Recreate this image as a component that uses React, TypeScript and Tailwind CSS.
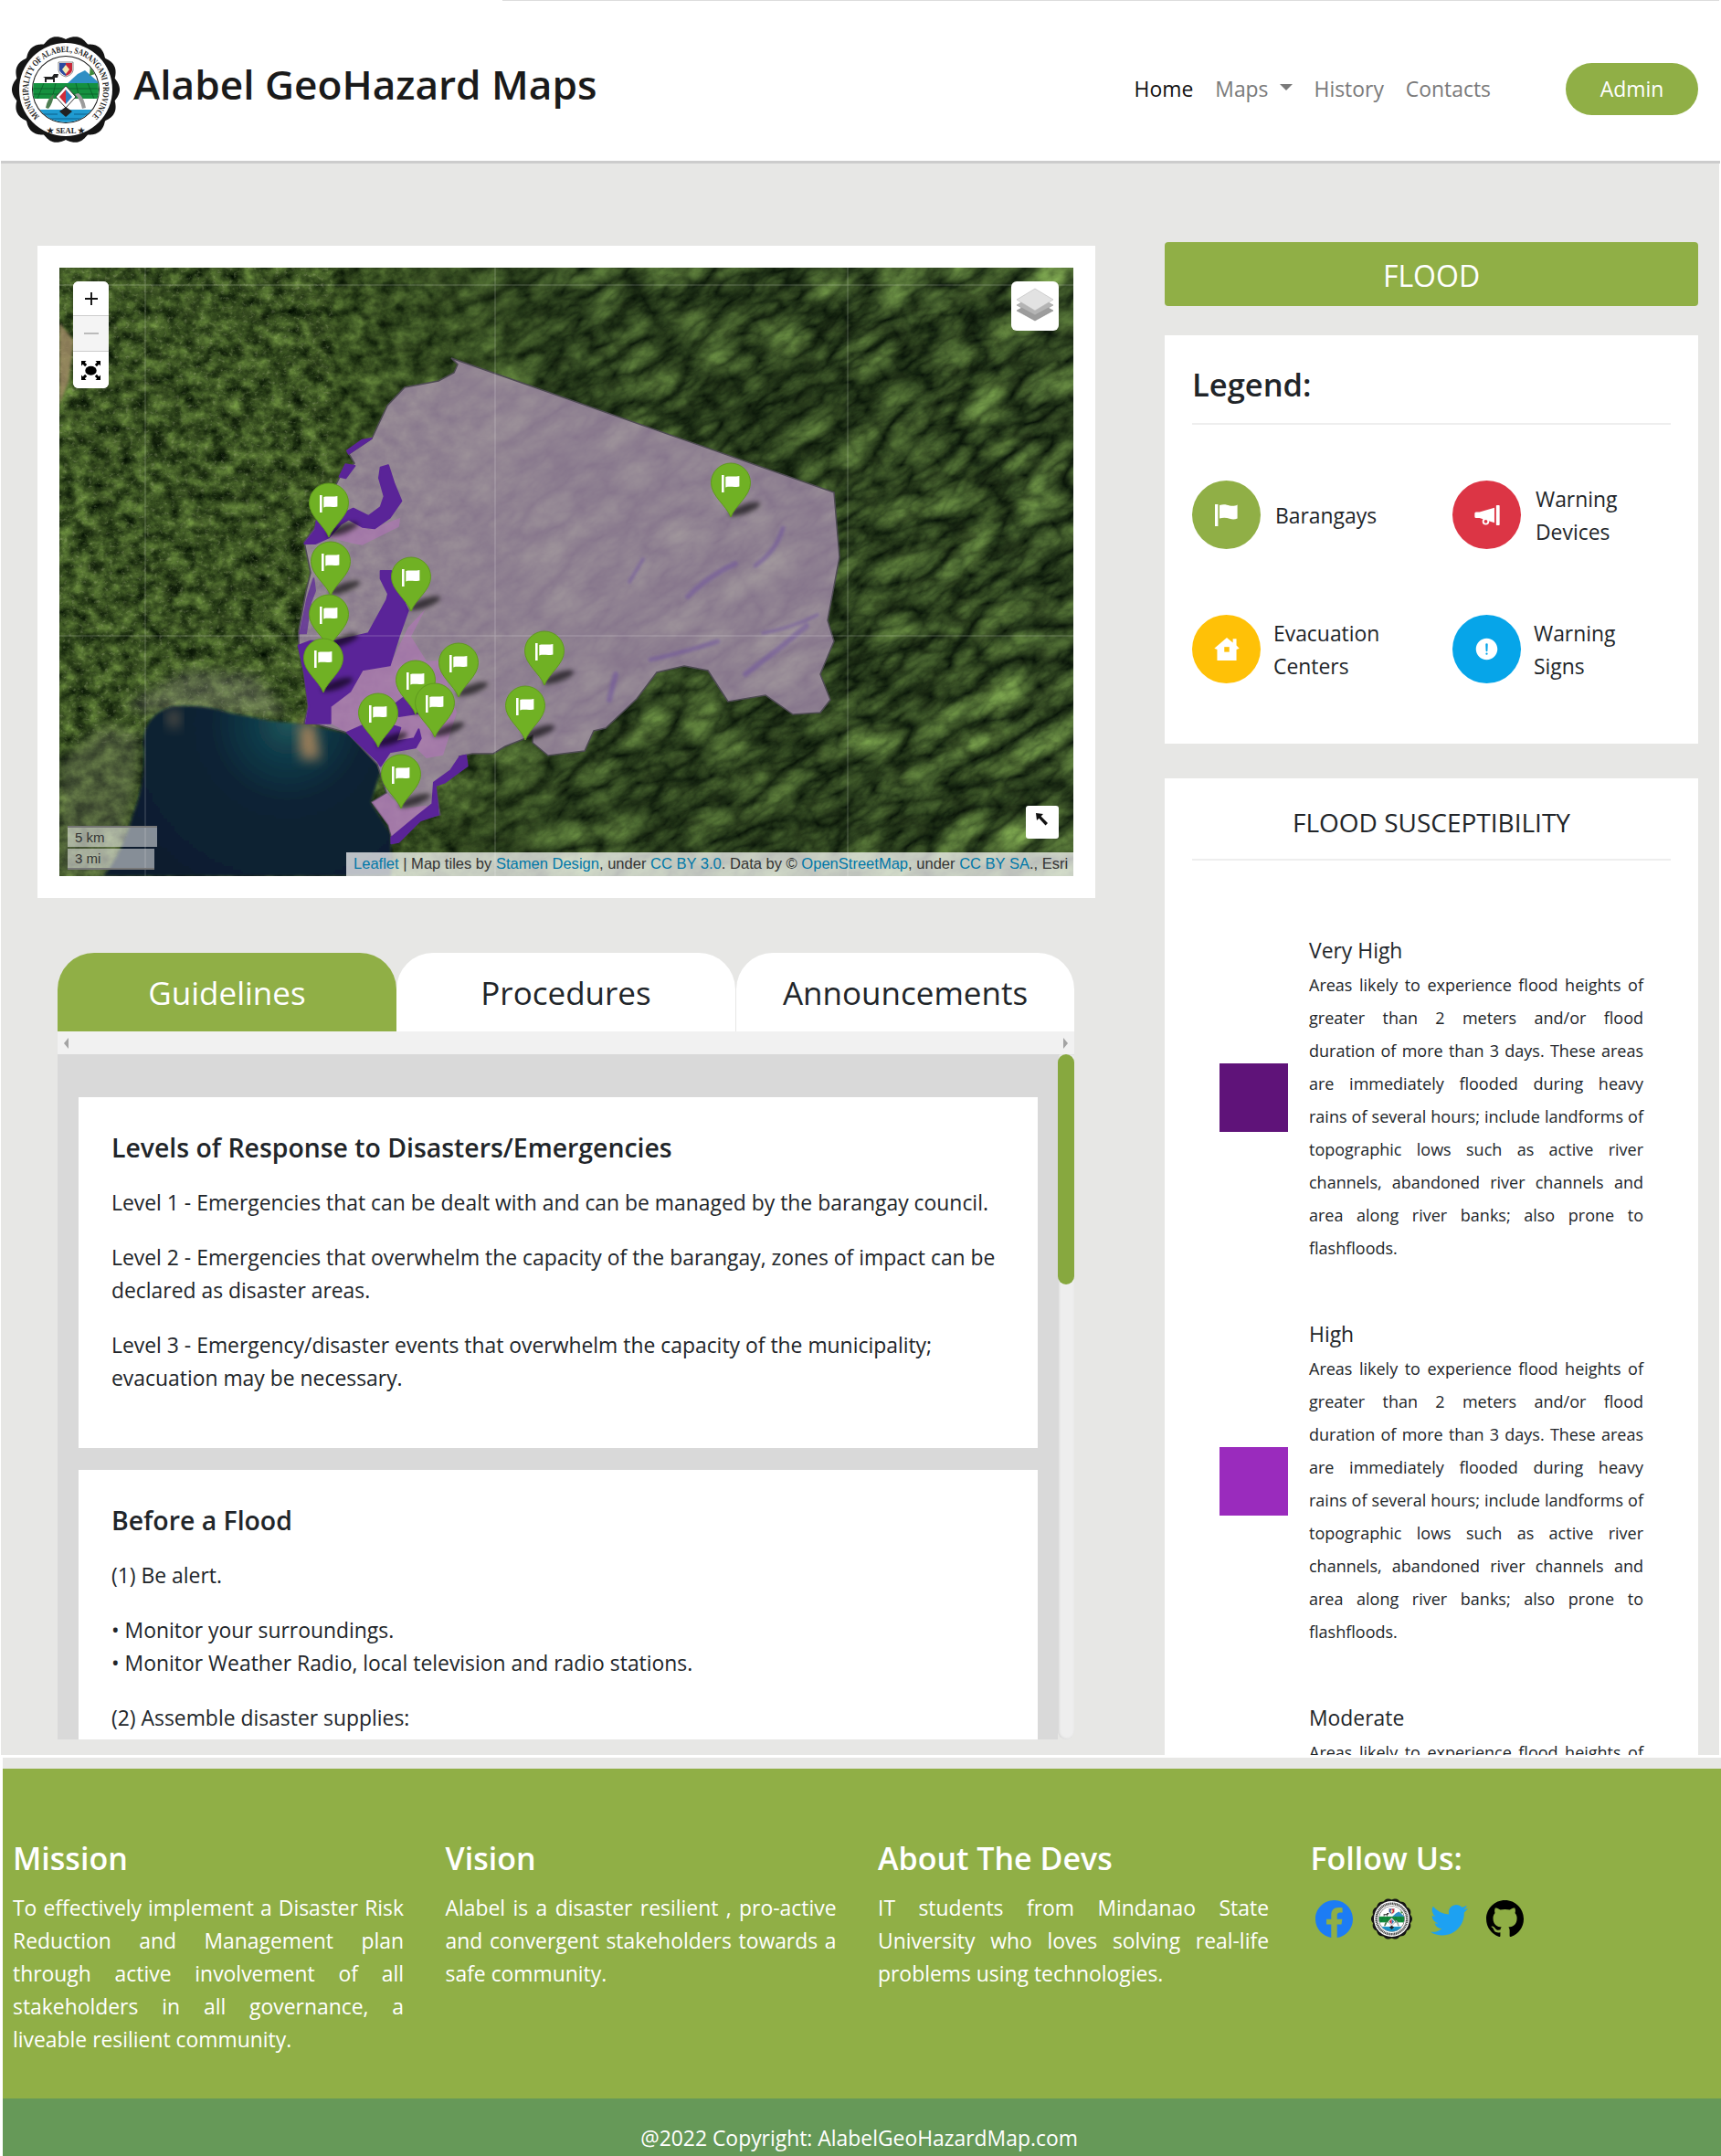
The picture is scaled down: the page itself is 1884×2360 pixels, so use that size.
import React from "react";
import { IoAlertCircle } from "react-icons/io5";
import { BsFacebook, BsTwitter, BsGithub } from "react-icons/bs";

function scallop(cx: number, cy: number, r: number, amp: number, n: number) {
  const pts: string[] = [];
  for (let i = 0; i < 360; i++) {
    const t = (i / 360) * Math.PI * 2;
    const rr = r + amp * Math.abs(Math.cos((t * n) / 2));
    pts.push(`${(cx + rr * Math.cos(t)).toFixed(2)},${(cy + rr * Math.sin(t)).toFixed(2)}`);
  }
  return pts.join(" ");
}

function Seal({ id, className, small }: { id: string; className: string; small?: boolean }) {
  return (
    <svg viewBox="0 0 118 118" className={className}>
      <defs>
        <path id={id} d="M 32.6 90.4 A 41 41 0 1 1 85.4 90.4" fill="none" />
        <clipPath id={id + "c"}>
          <circle cx="59" cy="59" r="36" />
        </clipPath>
      </defs>
      <polygon points={scallop(59, 59, 55, 4, 14)} fill="#151515" />
      <circle cx="59" cy="59" r="51" fill="#fff" />
      {small ? (
        <circle cx="59" cy="59" r="44" fill="none" stroke="#444" strokeWidth="7" strokeDasharray="3 1.5" />
      ) : (
        <>
          <text fontFamily="'Liberation Serif', serif" fontSize="9.6" fontWeight="700" fill="#1a1a1a">
            <textPath href={"#" + id} startOffset="50%" textAnchor="middle" textLength="194" lengthAdjust="spacingAndGlyphs">
              MUNICIPALITY OF ALABEL, SARANGANI PROVINCE
            </textPath>
          </text>
          <text x="59" y="107" textAnchor="middle" fontFamily="'Liberation Serif', serif" fontSize="8.5" fontWeight="700" fill="#222">
            ★ SEAL ★
          </text>
        </>
      )}
      <circle cx="59" cy="59" r="37" fill="#1a1a1a" />
      <g clipPath={`url(#${id}c)`}>
        <rect x="20" y="20" width="78" height="80" fill="#fff" />
        <path d="M60 53 L72 42 L80 38 L88 45 L97 53 Z" fill="#2f8fc4" />
        <path d="M86 30 l2 8 l6 -5 l-3 9 l-6 2 z" fill="#3f8a3a" />
        <rect x="20" y="52" width="78" height="17" fill="#14913f" />
        <path d="M24 58 H94 M22 64 H96 M35 52 L28 69 M48 52 L44 69 M70 52 L74 69 M83 52 L90 69" stroke="#0a5c28" strokeWidth=".8" />
        <rect x="20" y="81" width="78" height="22" fill="#1f9bd1" />
        <path d="M28 86 H50 M68 86 H90 M34 91 H84" stroke="#0c5f8a" strokeWidth="1" />
        <path d="M34 45 h10 l2 -3 h5 l-1 4 h-3 v5 h-2 v-3 h-7 v3 h-2 v-5 z" fill="#222" />
        <path d="M37 79 q2 -11 9 -15 q-1 10 -6 16 z" fill="#4d7d52" />
        <path d="M81 79 q-2 -11 -8 -16 l-4 1 q6 6 8 16 z" fill="#9b9b9b" />
      </g>
      <path d="M51 29 h16 v9 q-1 5 -8 7 q-7 -2 -8 -7 z" fill="#fff" stroke="#555" strokeWidth=".7" />
      <path d="M52 30 h7 v14 q-5 -2 -7 -6 z" fill="#2b4aa0" />
      <path d="M59 30 h7 v8 q-1 4 -7 6 z" fill="#c8283a" />
      <path d="M55 37 l4 -5 l4 5 l-4 5 z" fill="#f3e9b0" />
      <path d="M59 55 L70 67 L59 79 L48 67 Z" fill="#fff" stroke="#333" strokeWidth="1" />
      <path d="M59 59 L66 67 L59 75 Z" fill="#2d7fc0" />
      <path d="M59 59 L52 67 L59 75 Z" fill="#d22c3a" />
      <path d="M52 83 L59 78 L66 83 L59 89 Z" fill="#222" />
    </svg>
  );
}

function FlagGlyph({ className }: { className: string }) {
  return (
    <svg viewBox="-4 0 25 24" className={className} fill="currentColor">
      <rect x="-4" y="0" width="3.4" height="24" />
      <path d="M1 1 C6 -0.6 9 0.6 12 1.4 C15 2.2 18 2 20.6 0.4 V15.4 C18 16.8 15 16.8 12 15.8 C9 14.8 5 14.4 1 15.6 Z" />
    </svg>
  );
}

function MegaGlyph() {
  return (
    <svg viewBox="0 0 72 58" className="h-[22px] w-[28px]" fill="#fff">
      <rect x="62" y="0" width="10" height="58" rx="2" />
      <path d="M4 20 H14 L57 7 V51 L14 37 H4 Q0 37 0 33 V24 Q0 20 4 20 Z" />
      <circle cx="32" cy="47" r="7.5" fill="#dc3545" stroke="#fff" strokeWidth="5" />
    </svg>
  );
}

function HomeGlyph() {
  return (
    <svg viewBox="0 0 70 64" className="h-[25px] w-[28px]">
      <path d="M35 0 L52 14 V3 H62 V22 L70 30 L62 33 V64 H8 V33 L0 30 Z" fill="#fff" />
      <rect x="28" y="26" width="14" height="14" fill="#ffc107" />
    </svg>
  );
}

function Pin({ x, y }: { x: number; y: number }) {
  return (
    <g transform={`translate(${x},${y})`}>
      <ellipse cx="17" cy="-3" rx="18" ry="5" fill="#000" opacity=".6" filter="url(#pinshadow)" transform="rotate(-20)" />
      <path
        d="M0 0 C-5 -13 -21.5 -23 -21.5 -37.5 A21.5 21.5 0 1 1 21.5 -37.5 C21.5 -23 5 -13 0 0 Z"
        fill="#70b124"
        stroke="#5f9a1e"
        strokeWidth="1"
      />
      <rect x="-10" y="-46" width="2.6" height="19" fill="#fff" />
      <path d="M-5.7 -44 C-1 -45.5 2 -43.5 9.4 -45 V-33.5 C3 -32 0 -34 -5.7 -32.6 Z" fill="#fff" />
    </g>
  );
}

const pins: [number, number][] = [
  [735, 273],
  [295, 295],
  [297, 359],
  [385, 376],
  [295, 417],
  [531, 457],
  [289, 465],
  [437, 470],
  [390, 489],
  [411, 514],
  [510, 517],
  [349, 525],
  [374, 592],
];

function MapArt() {
  return (
    <svg viewBox="0 0 1110 666" className="block w-full h-full">
      <defs>
        <filter id="t1" x="0" y="0" width="100%" height="100%" colorInterpolationFilters="sRGB">
          <feTurbulence type="fractalNoise" baseFrequency="0.06 0.07" numOctaves="6" seed="8" />
          <feColorMatrix type="matrix" values="0 0 0 .55 -.05  0 0 0 .66 -.01  0 0 0 .32 -.03  0 0 0 0 1" />
        </filter>
        <filter id="t2" x="0" y="0" width="100%" height="100%" colorInterpolationFilters="sRGB">
          <feTurbulence type="turbulence" baseFrequency="0.014 0.028" numOctaves="6" seed="21" />
          <feColorMatrix type="matrix" values="0 0 0 .56 .01  0 0 0 .7 .05  0 0 0 .34 .02  0 0 0 0 1" />
        </filter>
        <filter id="t3" x="0" y="0" width="100%" height="100%" colorInterpolationFilters="sRGB">
          <feTurbulence type="fractalNoise" baseFrequency="0.22 0.28" numOctaves="3" seed="4" />
          <feColorMatrix type="matrix" values="0 0 0 0 .7  0 0 0 0 .72  0 0 0 0 .58  0 0 0 3.4 -1.95" />
        </filter>
        <filter id="t4" x="0" y="0" width="100%" height="100%" colorInterpolationFilters="sRGB">
          <feTurbulence type="fractalNoise" baseFrequency="0.03 0.05" numOctaves="5" seed="40" />
          <feColorMatrix type="matrix" values="0 0 0 0 .05  0 0 0 0 .07  0 0 0 0 .04  0 0 0 3 -1.5" />
        </filter>
        <filter id="pinshadow" x="-50%" y="-100%" width="200%" height="300%">
          <feGaussianBlur stdDeviation="2.5" />
        </filter>
        <filter id="soft" x="-30%" y="-30%" width="160%" height="160%">
          <feGaussianBlur stdDeviation="7" />
        </filter>
        <filter id="edge" x="-5%" y="-5%" width="110%" height="110%">
          <feGaussianBlur stdDeviation="1.5" />
        </filter>
        <linearGradient id="fade" x1="0" x2="1" y1="0" y2="0">
          <stop offset="0.25" stopColor="#fff" stopOpacity="0" />
          <stop offset="0.5" stopColor="#fff" stopOpacity=".9" />
          <stop offset="1" stopColor="#fff" stopOpacity="1" />
        </linearGradient>
        <mask id="rightmask">
          <rect width="1110" height="666" fill="url(#fade)" />
        </mask>
        <radialGradient id="sea" cx="250" cy="500" r="330" gradientUnits="userSpaceOnUse">
          <stop offset="0" stopColor="#1f5458" />
          <stop offset="0.1" stopColor="#113b49" />
          <stop offset="0.26" stopColor="#0a2334" />
          <stop offset="1" stopColor="#091829" />
        </radialGradient>
      </defs>
      <rect width="1110" height="666" fill="#34502a" />
      <rect width="1110" height="666" filter="url(#t1)" />
      <g mask="url(#rightmask)">
        <g transform="rotate(-32 555 333)">
          <rect x="-400" y="-400" width="1900" height="1500" filter="url(#t2)" />
        </g>
      </g>
      <rect width="1110" height="666" filter="url(#t4)" opacity=".28" />
      <rect width="300" height="520" filter="url(#t3)" opacity=".3" />
      <path d="M70 480 L140 440 L215 445 L250 490 L180 490 L100 488 Z" fill="#8f9080" opacity=".4" filter="url(#soft)" />
      <path d="M0 540 L50 500 L90 510 L84 570 L60 666 L0 666 Z" fill="#6f7560" opacity=".4" filter="url(#soft)" />
      <path d="M0 60 L16 80 L10 125 L0 150 Z" fill="#a98f6c" opacity=".75" filter="url(#edge)" />
      <path
        d="M124 480 Q160 478 184 487 L230 496 L270 500 L326 512 L356 537 L341 585 L363 620 L363 666 L48 666 Q70 640 80 600 Q96 560 92 520 Q92 490 124 480 Z"
        fill="url(#sea)"
        filter="url(#edge)"
      />
      <path d="M118 488 q8 -6 14 -2 l-3 20 l-9 -6 z" fill="#b08c62" opacity=".5" filter="url(#soft)" />
      <path d="M262 500 q14 -4 18 2 l6 36 l-22 0 z" fill="#b98d5d" opacity=".85" filter="url(#soft)" />
      <path
        d="M429 99 L436 106 L432 115 L415 124 L378 131 L359 151 L342 187 L317 204 L323 214 L307 229 L280 284 L268 300 L275 334 L270 354 L262 397 L262 414 L267 440 L272 480 L268 499 L278 499 L315 509 L348 544 L358 575 L342 585 L360 610 L365 630 L395 604 L417 599 L412 567 L445 545 L438 535 L452 532 L475 532 L488 524 L518 512 L518 520 L535 534 L575 529 L585 507 L598 504 L632 472 L654 443 L684 436 L710 441 L732 475 L773 468 L803 489 L833 487 L844 473 L833 445 L848 409 L841 386 L854 317 L848 246 Z"
        fill="#ae95b6"
        fillOpacity=".76"
        stroke="#4d4a52"
        strokeWidth="1.5"
      />
      <g stroke="#6c4f9e" strokeLinecap="round" fill="none" opacity=".5" filter="url(#edge)">
        <path d="M688 360 Q712 336 740 324" strokeWidth="6" />
        <path d="M762 326 Q785 310 792 285" strokeWidth="5" />
        <path d="M751 445 Q785 420 818 392" strokeWidth="6" />
        <path d="M602 473 L609 445" strokeWidth="6" />
        <path d="M647 429 Q680 422 721 409" strokeWidth="5" />
        <path d="M624 344 L639 319" strokeWidth="4" />
        <path d="M770 400 Q800 395 830 380" strokeWidth="4" />
      </g>
      <g transform="translate(235,187) scale(.33333)" strokeLinejoin="round">
        <path
          d="M180 880 L290 760 L380 745 L440 620 L497 560 L450 650 L500 730 L545 730 L600 900 L555 1040 L500 1050 L470 1020 L360 1000 L240 965 L185 935 Z M320 1195 L370 1165 L420 1215 L500 1205 L540 1235 L470 1250 L390 1320 L375 1270 Z M180 325 L270 270 L310 300 L415 260 L410 290 L330 330 L290 350 L260 345 Z"
          fill="#b075b8"
          opacity=".6"
        />
        <g fill="#5a2498" stroke="#5a2498" strokeWidth="6">
          <path d="M350 95 L375 88 L395 150 L418 205 L380 260 L330 295 L290 290 L245 265 L220 280 L180 325 L135 345 L100 345 L135 300 L140 270 L200 260 L260 230 L310 255 L350 225 L362 190 L345 130 Z" />
          <path d="M350 435 L385 435 L440 565 L410 650 L380 745 L290 760 L250 830 L185 880 L185 935 L105 935 L115 880 L100 770 L80 680 L120 665 L200 665 L310 640 L370 530 L375 510 L350 460 Z" />
          <path d="M400 870 L440 840 L490 900 L410 912 Z" />
          <path d="M240 965 L330 925 L415 950 L400 995 L460 985 L475 955 L482 985 L465 1015 L380 1030 L350 1075 L340 1060 Z" />
          <path d="M610 1045 L630 1040 L635 1075 L560 1130 L530 1140 L540 1235 L480 1255 L410 1325 L385 1330 L385 1310 L470 1240 L520 1200 L525 1130 L580 1090 Z" />
          <path d="M245 50 L320 0 L290 5 L240 40 Z" />
          <path d="M215 125 L235 85 L265 90 L235 130 Z" />
          <path d="M130 460 L108 530 L85 640 L105 640 L120 540 L135 500 Z" opacity=".7" />
        </g>
      </g>
      <g stroke="#fff" strokeWidth="1" opacity=".24">
        <path d="M94 0 V666 M477 0 V666 M863 0 V666 M0 19 H1110 M0 403 H1110" />
      </g>
      {pins.map(([x, y]) => (
        <Pin key={`${x}-${y}`} x={x} y={y} />
      ))}
    </svg>
  );
}

function MapBlock() {
  return (
    <div className="relative h-[666px] w-[1110px] overflow-hidden">
      <MapArt />
      <div className="absolute left-[15px] top-[15px] flex w-[39px] flex-col overflow-hidden rounded-[6px] bg-white">
        <div className="flex h-[38px] items-center justify-center border-b border-[#ccc] bg-white">
          <svg viewBox="0 0 16 16" className="h-[16px] w-[16px]">
            <path d="M8 1 V15 M1 8 H15" stroke="#111" strokeWidth="1.9" />
          </svg>
        </div>
        <div className="flex h-[39px] items-center justify-center border-b border-[#ccc] bg-[#f4f4f4]">
          <div className="h-[2px] w-[16px] bg-[#bbb]" />
        </div>
        <div className="flex h-[40px] items-center justify-center bg-white">
          <svg viewBox="0 0 21 21" className="h-[21px] w-[21px]" fill="#000">
            <ellipse cx="10.5" cy="10.7" rx="6.2" ry="5" />
            <path d="M0 0 H5.5 L3.8 1.7 L6.2 4.1 L4.1 6.2 L1.7 3.8 L0 5.5 Z" />
            <path d="M21 0 H15.5 L17.2 1.7 L14.8 4.1 L16.9 6.2 L19.3 3.8 L21 5.5 Z" />
            <path d="M0 21 H5.5 L3.8 19.3 L6.2 16.9 L4.1 14.8 L1.7 17.2 L0 15.5 Z" />
            <path d="M21 21 H15.5 L17.2 19.3 L14.8 16.9 L16.9 14.8 L19.3 17.2 L21 15.5 Z" />
          </svg>
        </div>
      </div>
      <div className="absolute right-[16px] top-[15px] flex h-[54px] w-[52px] items-center justify-center rounded-[6px] bg-white">
        <svg viewBox="0 0 40 40" className="h-[40px] w-[40px]">
          <path d="M20 14 L40 25 L20 36 L0 25 Z" fill="#9c9c9c" stroke="#888" strokeWidth=".6" />
          <path d="M20 8 L40 19 L20 30 L0 19 Z" fill="#b4b4b4" stroke="#999" strokeWidth=".6" />
          <path d="M20 1 L40 13 L20 25 L0 13 Z" fill="#e2e2e2" stroke="#bbb" strokeWidth=".6" />
        </svg>
      </div>
      <div className="absolute bottom-[41px] right-[16px] flex h-[36px] w-[36px] items-start justify-center rounded-[3px] bg-white pt-[7px]">
        <svg viewBox="0 0 16 16" className="h-[16px] w-[16px]">
          <path d="M1 1 L9 2 L6.6 4.4 L14 12 L11.5 14.5 L4.4 6.8 L2 9 Z" fill="#111" />
        </svg>
      </div>
      <div className="absolute bottom-[7px] left-[9px] flex flex-col gap-[2px] font-['Liberation_Sans',sans-serif] text-[15px] leading-[21px] text-[#333]">
        <div className="h-[23px] w-[98px] border-t-2 border-[#777] bg-[#ffffff80] px-[8px]">5 km</div>
        <div className="h-[23px] w-[95px] border-b-2 border-[#777] bg-[#ffffff80] px-[8px]">3 mi</div>
      </div>
      <div className="absolute bottom-0 right-0 h-[26px] w-[796px] bg-[#ffffffb8] pl-[8px] font-['Liberation_Sans',sans-serif] text-[16.55px] leading-[26px] whitespace-nowrap text-[#333]">
        <span className="text-[#0078a8]">Leaflet</span> | Map tiles by <span className="text-[#0078a8]">Stamen Design</span>, under{" "}
        <span className="text-[#0078a8]">CC BY 3.0</span>. Data by © <span className="text-[#0078a8]">OpenStreetMap</span>, under{" "}
        <span className="text-[#0078a8]">CC BY SA</span>., Esri
      </div>
    </div>
  );
}

const floodLines = [
  "Areas likely to experience flood heights of",
  "greater than 2 meters and/or flood",
  "duration of more than 3 days. These areas",
  "are immediately flooded during heavy",
  "rains of several hours; include landforms of",
  "topographic lows such as active river",
  "channels, abandoned river channels and",
  "area along river banks; also prone to",
];

function Susceptibility({ title, color, cut }: { title: string; color: string; cut?: boolean }) {
  return (
    <div className="mb-[58px] flex gap-[23px] pl-[30px]">
      {cut ? (
        <div className="h-[75px] w-[75px] shrink-0" />
      ) : (
        <div className={`mb-[4px] h-[75px] w-[75px] shrink-0 self-center ${color}`} />
      )}
      <div className="w-[366px]">
        <div className="text-[22.9px] leading-[38px] text-[#212529]">{title}</div>
        <div className="text-[18px] leading-[36px] text-[#212529]">
          {(cut ? floodLines.slice(0, 1) : floodLines).map((l) => (
            <div key={l} className="text-justify [text-align-last:justify]">
              {l}
            </div>
          ))}
          {!cut && <div>flashfloods.</div>}
        </div>
      </div>
    </div>
  );
}

function LegendItem({ color, icon, lines, gap }: { color: string; icon: React.ReactNode; lines: string[]; gap: string }) {
  return (
    <div className="flex items-center">
      <div className={`flex h-[75px] w-[75px] shrink-0 items-center justify-center rounded-full text-white ${color}`}>{icon}</div>
      <div className={`pt-[3px] text-[22.9px] leading-[36px] text-[#212529] ${gap}`}>
        {lines.map((l) => (
          <div key={l}>{l}</div>
        ))}
      </div>
    </div>
  );
}

export default function App() {
  return (
    <div className="h-[2360px] w-[1884px] overflow-hidden bg-white font-['Open_Sans',sans-serif]">
      <div className="ml-[550px] mr-[2px] h-px bg-[#dcdcdc]" />
      <header className="mx-[1px] flex h-[178px] items-center border-b-[3px] border-[#cccccc] pl-[12px] pr-[24px] pt-[18px]">
        <Seal id="sealA" className="h-[118px] w-[118px] shrink-0" />
        <div className="mb-[10px] ml-[15px] text-[44.2px] font-semibold leading-none text-[#1a1a1a]">Alabel GeoHazard Maps</div>
        <nav className="ml-auto mt-[2px] flex items-center gap-[24px] text-[22.9px] text-[#7a7a7a]">
          <span className="text-[#111]">Home</span>
          <span className="flex items-center gap-[12px]">
            Maps
            <span className="mb-[6px] h-0 w-0 border-x-[7px] border-t-[7px] border-x-transparent border-t-[#7a7a7a]" />
          </span>
          <span>History</span>
          <span>Contacts</span>
        </nav>
        <div className="ml-[82px] flex h-[57px] w-[145px] items-center justify-center rounded-full bg-[#90af46] pt-[2px] text-[22.9px] text-white">
          Admin
        </div>
      </header>

      <main className="ml-[1px] mr-[2px] flex h-[1742px] overflow-hidden bg-[#e7e7e5]">
        <section className="ml-[40px] w-[1158px] shrink-0 pt-[90px]">
          <div className="bg-white p-[24px]">
            <MapBlock />
          </div>
          <div className="ml-[22px] mt-[60px] w-[1113px]">
            <div className="flex h-[86px]">
              <div className="flex w-[371px] items-center justify-center rounded-t-[40px] bg-[#90af46] pt-[2px] text-[35px] text-white">Guidelines</div>
              <div className="flex w-[371px] items-center justify-center rounded-t-[40px] bg-white pt-[2px] text-[35px] text-[#212529]">Procedures</div>
              <div className="ml-[1px] flex w-[370px] items-center justify-center rounded-t-[40px] bg-white pt-[2px] text-[35px] text-[#212529]">Announcements</div>
            </div>
            <div className="flex h-[25px] items-center justify-between bg-[#f1f1f1] px-[7px]">
              <span className="h-0 w-0 border-y-[6px] border-r-[5px] border-y-transparent border-r-[#a3a3a3]" />
              <span className="h-0 w-0 border-y-[6px] border-l-[5px] border-y-transparent border-l-[#a3a3a3]" />
            </div>
            <div className="flex h-[750px]">
              <div className="w-[1095px] overflow-hidden bg-[#d9d9d9] pl-[23px] pr-[22px] pt-[47px]">
                <article className="bg-white px-[36px] pb-[34px] pt-[37px] text-[22.9px] leading-[36px] text-[#212529]">
                  <h2 className="mb-[25px] text-[28.4px] font-semibold leading-[36px]">Levels of Response to Disasters/Emergencies</h2>
                  <p className="mb-[24px]">Level 1 - Emergencies that can be dealt with and can be managed by the barangay council.</p>
                  <p className="mb-[24px]">Level 2 - Emergencies that overwhelm the capacity of the barangay, zones of impact can be declared as disaster areas.</p>
                  <p className="mb-[24px]">Level 3 - Emergency/disaster events that overwhelm the capacity of the municipality; evacuation may be necessary.</p>
                </article>
                <article className="mt-[24px] h-[400px] bg-white px-[36px] pt-[37px] text-[22.9px] leading-[36px] text-[#212529]">
                  <h2 className="mb-[25px] text-[28.4px] font-semibold leading-[36px]">Before a Flood</h2>
                  <p className="mb-[24px]">(1) Be alert.</p>
                  <p className="mb-[24px]">
                    • Monitor your surroundings.
                    <br />• Monitor Weather Radio, local television and radio stations.
                  </p>
                  <p>(2) Assemble disaster supplies:</p>
                </article>
              </div>
              <div className="h-full w-[18px] rounded-b-full bg-[#eeeeee] shadow-[inset_1px_0_3px_#d0d0d0]">
                <div className="h-[252px] w-full rounded-full bg-[#87a83f]" />
              </div>
            </div>
          </div>
        </section>

        <aside className="ml-[76px] w-[584px] shrink-0 pt-[86px]">
          <div className="flex h-[70px] items-center justify-center rounded-[4px] bg-[#90af46] pt-[4px] text-[32px] text-white">FLOOD</div>
          <div className="mt-[32px] h-[447px] bg-white px-[30px] pt-[27px]">
            <div className="border-b-2 border-[#eeeeee] pb-[15px] text-[34.5px] font-semibold leading-[54px] text-[#212529]">Legend:</div>
            <div className="mt-[61px] grid grid-cols-[285px_1fr] gap-y-[72px]">
              <LegendItem color="bg-[#90af46]" gap="ml-[16px]" lines={["Barangays"]} icon={<FlagGlyph className="h-[24px] w-[25px]" />} />
              <LegendItem color="bg-[#dc3545]" gap="ml-[16px]" lines={["Warning", "Devices"]} icon={<MegaGlyph />} />
              <LegendItem color="bg-[#ffc107]" gap="ml-[14px]" lines={["Evacuation", "Centers"]} icon={<HomeGlyph />} />
              <LegendItem color="bg-[#06a5e9]" gap="ml-[14px]" lines={["Warning", "Signs"]} icon={<IoAlertCircle className="h-[29px] w-[29px]" />} />
            </div>
          </div>
          <div className="mt-[38px] h-[1200px] bg-white px-[30px] pt-[30px]">
            <div className="border-b-2 border-[#eeeeee] pb-[22px] text-center text-[28px] font-medium leading-[36px] text-[#212529]">FLOOD SUSCEPTIBILITY</div>
            <div className="mt-[80px]">
              <Susceptibility title="Very High" color="bg-[#5f1379]" />
              <Susceptibility title="High" color="bg-[#9a2bbd]" />
              <Susceptibility title="Moderate" color="bg-[#c070d8]" cut />
            </div>
          </div>
        </aside>
      </main>

      <div className="ml-[3px] mt-[3px] h-[12px] bg-[#e7e7e5]" />
      <footer className="ml-[3px] text-white">
        <div className="h-[361px] bg-[#90af46] pl-[11px] pt-[76px]">
          <div className="grid grid-cols-[428px_428px_428px_428px] gap-x-[45.5px] text-[22.9px] leading-[36px]">
            <div>
              <h3 className="mb-[15px] text-[34px] font-semibold leading-[44px]">Mission</h3>
              <p className="text-justify">To effectively implement a Disaster Risk Reduction and Management plan through active involvement of all stakeholders in all governance, a liveable resilient community.</p>
            </div>
            <div>
              <h3 className="mb-[15px] text-[34px] font-semibold leading-[44px]">Vision</h3>
              <p className="text-justify">Alabel is a disaster resilient , pro-active and convergent stakeholders towards a safe community.</p>
            </div>
            <div>
              <h3 className="mb-[15px] text-[34px] font-semibold leading-[44px]">About The Devs</h3>
              <p className="text-justify">IT students from Mindanao State University who loves solving real-life problems using technologies.</p>
            </div>
            <div>
              <h3 className="text-[34px] font-semibold leading-[44px]">Follow Us:</h3>
              <div className="mt-[22px] flex items-center gap-[20px] pl-[5px]">
                <BsFacebook className="h-[41px] w-[41px] text-[#1c7cf4]" />
                <Seal id="sealB" small className="h-[45px] w-[45px]" />
                <BsTwitter className="h-[41px] w-[41px] text-[#1da1f2]" />
                <BsGithub className="h-[41px] w-[41px] text-black" />
              </div>
            </div>
          </div>
        </div>
        <div className="h-[63px] bg-[#669958] pr-[6px] pt-[26px] text-center text-[22.9px] leading-[36px]">@2022 Copyright: AlabelGeoHazardMap.com</div>
      </footer>
    </div>
  );
}
